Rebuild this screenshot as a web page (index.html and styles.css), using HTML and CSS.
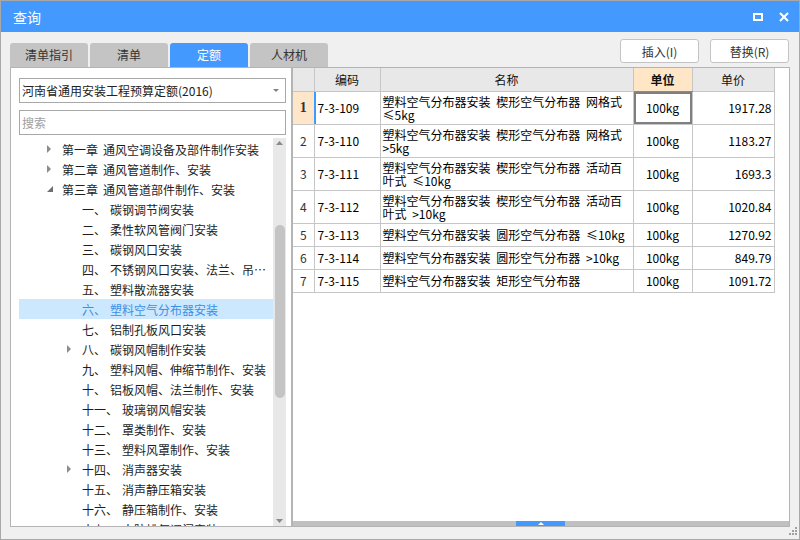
FILE: index.html
```html
<!DOCTYPE html>
<html lang="zh-CN">
<head>
<meta charset="utf-8">
<title>查询</title>
<link rel="stylesheet" href="styles.css">
</head>
<body>
<div class="window">
  <div class="titlebar">
    <span class="title">查询</span>
    <div class="win-btns">
      <svg width="10" height="8" viewBox="0 0 10 8"><rect x="1" y="1" width="8" height="6" fill="none" stroke="#fff" stroke-width="2"/></svg>
      <svg width="10" height="10" viewBox="0 0 10 10"><path d="M1 1L9 9M9 1L1 9" stroke="#fff" stroke-width="2"/></svg>
    </div>
  </div>
  <div class="toolbar">
    <div class="tabs">
      <div class="tab">清单指引</div>
      <div class="tab">清单</div>
      <div class="tab active">定额</div>
      <div class="tab">人材机</div>
    </div>
    <div class="actions">
      <button class="btn">插入(I)</button>
      <button class="btn">替换(R)</button>
    </div>
  </div>
  <div class="main">
    <div class="left">
      <div class="select">河南省通用安装工程预算定额(2016)<svg class="caret" width="6" height="4" viewBox="0 0 6 4"><path d="M0 0H6L3 3Z" fill="#808080"/></svg></div>
      <div class="search">搜索</div>
      <div class="tree-wrap">
        <div class="tree">
          <div class="row l1"><span class="exp"><svg width="5" height="8" viewBox="0 0 5 8"><path d="M0 0L4 4L0 8Z"/></svg></span><span class="label"><span class="ch">第一章</span>通风空调设备及部件制作安装</span></div>
          <div class="row l1"><span class="exp"><svg width="5" height="8" viewBox="0 0 5 8"><path d="M0 0L4 4L0 8Z"/></svg></span><span class="label"><span class="ch">第二章</span>通风管道制作、安装</span></div>
          <div class="row l1"><span class="exp"><svg class="open" width="6" height="6" viewBox="0 0 6 6"><path d="M6 0V6H0Z"/></svg></span><span class="label"><span class="ch">第三章</span>通风管道部件制作、安装</span></div>
          <div class="row l2"><span class="exp"></span><span class="label"><span class="num">一、</span>碳钢调节阀安装</span></div>
          <div class="row l2"><span class="exp"></span><span class="label"><span class="num">二、</span>柔性软风管阀门安装</span></div>
          <div class="row l2"><span class="exp"></span><span class="label"><span class="num">三、</span>碳钢风口安装</span></div>
          <div class="row l2"><span class="exp"></span><span class="label"><span class="num">四、</span>不锈钢风口安装、法兰、吊托支架制作安装</span></div>
          <div class="row l2"><span class="exp"></span><span class="label"><span class="num">五、</span>塑料散流器安装</span></div>
          <div class="row l2 selected"><span class="exp"></span><span class="label"><span class="num">六、</span>塑料空气分布器安装</span></div>
          <div class="row l2"><span class="exp"></span><span class="label"><span class="num">七、</span>铝制孔板风口安装</span></div>
          <div class="row l2"><span class="exp"><svg width="5" height="8" viewBox="0 0 5 8"><path d="M0 0L4 4L0 8Z"/></svg></span><span class="label"><span class="num">八、</span>碳钢风帽制作安装</span></div>
          <div class="row l2"><span class="exp"></span><span class="label"><span class="num">九、</span>塑料风帽、伸缩节制作、安装</span></div>
          <div class="row l2"><span class="exp"></span><span class="label"><span class="num">十、</span>铝板风帽、法兰制作、安装</span></div>
          <div class="row l2"><span class="exp"></span><span class="label"><span class="num">十一、</span>玻璃钢风帽安装</span></div>
          <div class="row l2"><span class="exp"></span><span class="label"><span class="num">十二、</span>罩类制作、安装</span></div>
          <div class="row l2"><span class="exp"></span><span class="label"><span class="num">十三、</span>塑料风罩制作、安装</span></div>
          <div class="row l2"><span class="exp"><svg width="5" height="8" viewBox="0 0 5 8"><path d="M0 0L4 4L0 8Z"/></svg></span><span class="label"><span class="num">十四、</span>消声器安装</span></div>
          <div class="row l2"><span class="exp"></span><span class="label"><span class="num">十五、</span>消声静压箱安装</span></div>
          <div class="row l2"><span class="exp"></span><span class="label"><span class="num">十六、</span>静压箱制作、安装</span></div>
          <div class="row l2"><span class="exp"></span><span class="label"><span class="num">十七、</span>人防排气阀门安装</span></div>
        </div>
        <div class="vscroll">
          <div class="varrow"><svg width="7" height="4" viewBox="0 0 7 4"><path d="M0 4L3.5 0L7 4Z" fill="#8a8a8a"/></svg></div>
          <div class="vthumb"></div>
          <div class="vspace"></div>
          <div class="varrow"><svg width="7" height="4" viewBox="0 0 7 4"><path d="M0 0H7L3.5 4Z" fill="#8a8a8a"/></svg></div>
        </div>
      </div>
    </div>
    <div class="right">
      <div class="grid-wrap">
        <table class="grid">
          <colgroup>
            <col class="c-no"><col class="c-code"><col class="c-name"><col class="c-unit"><col class="c-price">
          </colgroup>
          <thead>
            <tr><th></th><th>编码</th><th>名称</th><th class="unit-h">单位</th><th>单价</th></tr>
          </thead>
          <tbody>
            <tr class="tall current"><td class="no">1</td><td class="code">7-3-109</td><td class="name">塑料空气分布器安装 楔形空气分布器 网格式 ≤5kg</td><td class="unit">100kg</td><td class="price">1917.28</td></tr>
            <tr class="tall"><td class="no">2</td><td class="code">7-3-110</td><td class="name">塑料空气分布器安装 楔形空气分布器 网格式 &gt;5kg</td><td class="unit">100kg</td><td class="price">1183.27</td></tr>
            <tr class="tall"><td class="no">3</td><td class="code">7-3-111</td><td class="name">塑料空气分布器安装 楔形空气分布器 活动百叶式 ≤10kg</td><td class="unit">100kg</td><td class="price">1693.3</td></tr>
            <tr class="tall"><td class="no">4</td><td class="code">7-3-112</td><td class="name">塑料空气分布器安装 楔形空气分布器 活动百叶式 &gt;10kg</td><td class="unit">100kg</td><td class="price">1020.84</td></tr>
            <tr><td class="no">5</td><td class="code">7-3-113</td><td class="name">塑料空气分布器安装 圆形空气分布器 ≤10kg</td><td class="unit">100kg</td><td class="price">1270.92</td></tr>
            <tr><td class="no">6</td><td class="code">7-3-114</td><td class="name">塑料空气分布器安装 圆形空气分布器 &gt;10kg</td><td class="unit">100kg</td><td class="price">849.79</td></tr>
            <tr><td class="no">7</td><td class="code">7-3-115</td><td class="name">塑料空气分布器安装 矩形空气分布器</td><td class="unit">100kg</td><td class="price">1091.72</td></tr>
          </tbody>
        </table>
      </div>
      <div class="hscroll">
        <div class="hthumb"><svg width="6" height="3" viewBox="0 0 6 3"><path d="M0 3L3 0L6 3Z" fill="#fff"/></svg></div>
      </div>
    </div>
  </div>
  <div class="footer">
    <svg width="8" height="8" viewBox="0 0 8 8" fill="#a0a0a0"><rect x="6" y="0" width="2" height="2"/><rect x="3" y="3" width="2" height="2"/><rect x="6" y="3" width="2" height="2"/><rect x="0" y="6" width="2" height="2"/><rect x="3" y="6" width="2" height="2"/><rect x="6" y="6" width="2" height="2"/></svg>
  </div>
</div>
</body>
</html>
```

FILE: styles.css
```css
* { box-sizing: border-box; }
html, body { margin: 0; padding: 0; }
body {
  font-family: "Noto Sans CJK SC", "Noto Sans", sans-serif;
  font-size: 12px;
  color: #222;
  background: #fff;
}

.window {
  width: 800px;
  height: 540px;
  border: 1px solid #a8a8a8;
  background: #f0f0f0;
  display: flex;
  flex-direction: column;
  overflow: hidden;
}

.titlebar {
  height: 31px;
  flex: none;
  background: #4499ff;
  color: #fff;
  display: flex;
  align-items: center;
  justify-content: space-between;
  padding: 0 10px 0 12px;
}
.title { font-size: 14px; line-height: 31px; padding-top: 2px; }
.win-btns { display: flex; align-items: center; gap: 16px; }
.win-btns svg { display: block; }

.toolbar {
  height: 35px;
  flex: none;
  display: flex;
  justify-content: space-between;
  align-items: flex-end;
  padding: 0 10px 0 9px;
}
.tabs { display: flex; gap: 2px; }
.tab {
  width: 78px;
  height: 24px;
  line-height: 24px;
  text-align: center;
  background: #c4c4c4;
  color: #333;
  border-radius: 3px 3px 0 0;
  font-size: 12px;
}
.tab.active { background: #4499ff; color: #fff; }
.actions { display: flex; gap: 11px; margin-bottom: 4px; }
.btn {
  width: 79px;
  height: 24px;
  border: 1px solid #c4c4c4;
  border-radius: 3px;
  background: #fff;
  font: 12px "Noto Sans CJK SC", sans-serif;
  color: #333;
  padding: 0;
}

.main {
  flex: 1;
  min-height: 0;
  display: flex;
  padding: 0 9px;
}

.left {
  width: 282px;
  flex: none;
  background: #fff;
  border: 1px solid #b4b4b4;
  padding: 10px 5px 0 8px;
  display: flex;
  flex-direction: column;
  min-height: 0;
}
.select {
  height: 25px;
  flex: none;
  border: 1px solid #a8a8a8;
  line-height: 23px;
  padding-left: 2px;
  display: flex;
  justify-content: space-between;
  align-items: center;
  color: #222;
}
.caret { margin-right: 6px; }
.search {
  height: 25px;
  flex: none;
  margin-top: 7px;
  border: 1px solid #a8a8a8;
  line-height: 23px;
  padding-left: 2px;
  color: #a0a0a0;
}
.tree-wrap {
  flex: 1;
  min-height: 0;
  margin-top: 3px;
  display: flex;
  overflow: hidden;
}
.tree {
  flex: 1;
  min-width: 0;
  padding-top: 1px;
  overflow: hidden;
}
.row {
  height: 20px;
  display: flex;
  align-items: center;
  white-space: nowrap;
  color: #1e1e1e;
}
.row.l1 { padding-left: 27px; }
.row.l2 { padding-left: 47px; }
.exp {
  width: 16px;
  flex: none;
  display: flex;
  align-items: center;
  padding-left: 1px;
}
.exp svg { display: block; fill: #8c8c8c; }
.exp svg.open { fill: #6e6e6e; }
.label {
  flex: 1;
  min-width: 0;
  overflow: hidden;
  text-overflow: ellipsis;
  white-space: nowrap;
  padding-right: 6px;
}
.ch { margin-right: 5px; }
.num { margin-right: 4px; }
.row.selected { background: #cce8ff; color: #3d8fe6; }

.vscroll {
  width: 13px;
  flex: none;
  background: #e8e8e8;
  display: flex;
  flex-direction: column;
  align-items: center;
}
.varrow { height: 10px; flex: none; display: flex; align-items: center; justify-content: center; }
.varrow svg { display: block; }
.vthumb {
  width: 10px;
  height: 173px;
  margin-top: 77px;
  background: #c4c4c4;
  border-radius: 5px;
  flex: none;
}
.vspace { flex: 1; }

.right {
  flex: 1;
  min-width: 0;
  background: #fff;
  border: 1px solid #b4b4b4;
  display: flex;
  flex-direction: column;
}
.grid-wrap { flex: 1; min-height: 0; overflow: hidden; }
.grid {
  border-collapse: collapse;
  table-layout: fixed;
  width: 481px;
  font-size: 12px;
  color: #000;
}
.c-no { width: 21px; }
.c-code { width: 66px; }
.c-name { width: 253px; }
.c-unit { width: 59px; }
.c-price { width: 82px; }
.grid th, .grid td {
  border: 1px solid #c6c6c6;
  padding: 0;
  overflow: hidden;
}
.grid th:first-child, .grid td:first-child { border-left: 0; }
.grid thead th { border-top: 0; }
.grid th {
  background: #e8e8e8;
  font-weight: normal;
  height: 23px;
  text-align: center;
  color: #111;
}
.grid th.unit-h {
  background: #ffe6c6;
  font-weight: bold;
  border-bottom-color: #3d9bff;
}
.grid td { height: 23px; line-height: 16px; }
.grid tr.tall td { height: 33px; line-height: 13px; }
.grid td.no { text-align: center; color: #333; }
.grid td.code { padding-left: 3px; }
.grid td.name { padding: 0 5px 0 2px; word-spacing: 3px; }
.grid td.unit { text-align: center; }
.grid td.price { text-align: right; padding-right: 2px; }
.grid tr.current td.no {
  background: #ffe6c8;
  font-weight: bold;
  font-family: "Liberation Serif", serif;
  font-size: 14px;
  border-right-color: #3d9bff;
}
.grid tr.current td.code { box-shadow: inset 1px 0 0 #3d9bff; }
.grid tr.current td.unit { box-shadow: inset 0 0 0 2px #7f7f7f; }

.hscroll {
  height: 5px;
  flex: none;
  background: #c0c0c0;
  display: flex;
}
.hthumb {
  width: 49px;
  margin-left: 223px;
  background: #4499ff;
  display: flex;
  align-items: center;
  justify-content: center;
}
.hthumb svg { display: block; }

.footer {
  height: 12px;
  flex: none;
  display: flex;
  justify-content: flex-end;
  align-items: flex-start;
  padding-right: 2px;
}
.footer svg { display: block; }
```
